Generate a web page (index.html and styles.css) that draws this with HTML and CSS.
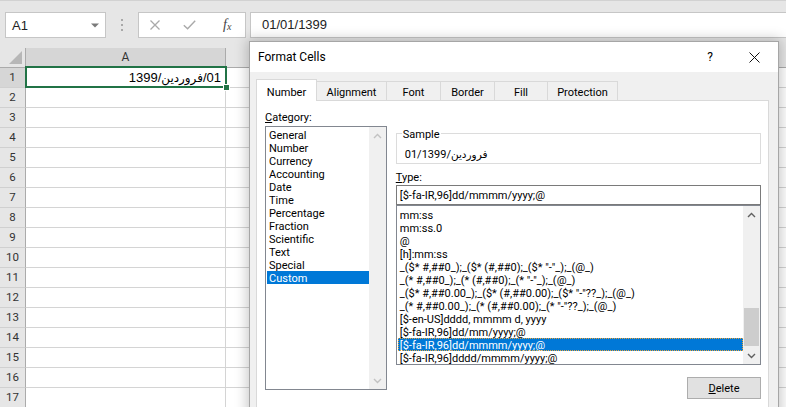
FILE: index.html
```html
<!DOCTYPE html>
<html lang="en">
<head>
<meta charset="utf-8">
<title>Format Cells</title>
<link rel="stylesheet" href="styles.css">
</head>
<body>
<div class="app">
  <div class="ribbon-edge"></div>
  <div class="fbar">
    <div class="namebox"><span>A1</span><svg class="nb-arrow" width="8" height="5" viewBox="0 0 8 5"><path d="M0 0.5h8L4 4.5z" fill="#7a7a7a"/></svg></div>
    <div class="grip"><i></i><i></i><i></i></div>
    <div class="fbtns">
      <svg class="ic-cancel" width="10" height="10" viewBox="0 0 10 10"><path d="M0.5 0.5L9.5 9.5M9.5 0.5L0.5 9.5" stroke="#a9a9a9" stroke-width="1.3" fill="none"/></svg>
      <svg class="ic-ok" width="13" height="10" viewBox="0 0 13 10"><path d="M0.8 5.2L4.6 8.8L12.2 0.8" stroke="#a9a9a9" stroke-width="1.4" fill="none"/></svg>
      <span class="fx">f<sub>x</sub></span>
    </div>
    <div class="finput">01/01/1399</div>
  </div>

  <div class="sheet">
    <div class="row head">
      <div class="rh corner"><svg width="13" height="13" viewBox="0 0 13 13"><path d="M13 0V13H0z" fill="#b7b7b7"/></svg></div>
      <div class="ca hdr-sel">A</div>
      <div class="rest hdr"></div>
    </div>
    <div class="row"><div class="rh rh-sel">1</div><div class="ca a1"><span class="cv"><span>1399/</span><span class="ar">فروردین</span><span>/01</span></span></div><div class="rest"></div></div>
    <div class="row"><div class="rh">2</div><div class="ca"></div><div class="rest"></div></div>
    <div class="row"><div class="rh">3</div><div class="ca"></div><div class="rest"></div></div>
    <div class="row"><div class="rh">4</div><div class="ca"></div><div class="rest"></div></div>
    <div class="row"><div class="rh">5</div><div class="ca"></div><div class="rest"></div></div>
    <div class="row"><div class="rh">6</div><div class="ca"></div><div class="rest"></div></div>
    <div class="row"><div class="rh">7</div><div class="ca"></div><div class="rest"></div></div>
    <div class="row"><div class="rh">8</div><div class="ca"></div><div class="rest"></div></div>
    <div class="row"><div class="rh">9</div><div class="ca"></div><div class="rest"></div></div>
    <div class="row"><div class="rh">10</div><div class="ca"></div><div class="rest"></div></div>
    <div class="row"><div class="rh">11</div><div class="ca"></div><div class="rest"></div></div>
    <div class="row"><div class="rh">12</div><div class="ca"></div><div class="rest"></div></div>
    <div class="row"><div class="rh">13</div><div class="ca"></div><div class="rest"></div></div>
    <div class="row"><div class="rh">14</div><div class="ca"></div><div class="rest"></div></div>
    <div class="row"><div class="rh">15</div><div class="ca"></div><div class="rest"></div></div>
    <div class="row"><div class="rh">16</div><div class="ca"></div><div class="rest"></div></div>
    <div class="row"><div class="rh">17</div><div class="ca"></div><div class="rest"></div></div>
  </div>

  <div class="selbox"></div>
  <div class="selhandle"></div>

  <div class="dialog">
    <div class="titlebar">
      <span class="title">Format Cells</span>
      <span class="help">?</span>
      <svg class="close" width="11" height="11" viewBox="0 0 11 11"><path d="M0.5 0.5L10.5 10.5M10.5 0.5L0.5 10.5" stroke="#111" stroke-width="1" fill="none"/></svg>
    </div>
    <div class="dbody">
      <div class="tabs">
        <div class="tab active t-number">Number</div>
        <div class="tab t-align">Alignment</div>
        <div class="tab t-font">Font</div>
        <div class="tab t-border">Border</div>
        <div class="tab t-fill">Fill</div>
        <div class="tab t-prot">Protection</div>
      </div>
      <div class="panel">
        <div class="catcol">
          <div class="lbl"><u>C</u>ategory:</div>
          <div class="listbox cat">
            <div class="items">
              <div class="it">General</div>
              <div class="it">Number</div>
              <div class="it">Currency</div>
              <div class="it">Accounting</div>
              <div class="it">Date</div>
              <div class="it">Time</div>
              <div class="it">Percentage</div>
              <div class="it">Fraction</div>
              <div class="it">Scientific</div>
              <div class="it">Text</div>
              <div class="it">Special</div>
              <div class="it sel">Custom</div>
            </div>
            <div class="vscroll off">
              <div class="arr"><svg width="9" height="6" viewBox="0 0 9 6"><path d="M1 5L4.5 1.5L8 5" stroke="#c2c2c2" stroke-width="1.4" fill="none"/></svg></div>
              <div class="track"></div>
              <div class="arr"><svg width="9" height="6" viewBox="0 0 9 6"><path d="M1 1L4.5 4.5L8 1" stroke="#c2c2c2" stroke-width="1.4" fill="none"/></svg></div>
            </div>
          </div>
        </div>
        <div class="maincol">
          <div class="group">
            <span class="glabel">Sample</span>
            <div class="sample"><span>01/1399/</span><span class="ar">فروردین</span></div>
          </div>
          <div class="lbl type-lbl"><u>T</u>ype:</div>
          <div class="tinput">[$-fa-IR,96]dd/mmmm/yyyy;@</div>
          <div class="listbox types">
            <div class="items">
              <div class="it">mm:ss</div>
              <div class="it">mm:ss.0</div>
              <div class="it">@</div>
              <div class="it">[h]:mm:ss</div>
              <div class="it">_($* #,##0_);_($* (#,##0);_($* "-"_);_(@_)</div>
              <div class="it">_(* #,##0_);_(* (#,##0);_(* "-"_);_(@_)</div>
              <div class="it">_($* #,##0.00_);_($* (#,##0.00);_($* "-"??_);_(@_)</div>
              <div class="it">_(* #,##0.00_);_(* (#,##0.00);_(* "-"??_);_(@_)</div>
              <div class="it">[$-en-US]dddd, mmmm d, yyyy</div>
              <div class="it">[$-fa-IR,96]dd/mm/yyyy;@</div>
              <div class="it sel focus">[$-fa-IR,96]dd/mmmm/yyyy;@</div>
              <div class="it">[$-fa-IR,96]dddd/mmmm/yyyy;@</div>
            </div>
            <div class="vscroll">
              <div class="arr"><svg width="9" height="6" viewBox="0 0 9 6"><path d="M1 5L4.5 1.5L8 5" stroke="#606060" stroke-width="1.4" fill="none"/></svg></div>
              <div class="track"></div>
              <div class="thumb"></div>
              <div class="gap1"></div>
              <div class="arr"><svg width="9" height="6" viewBox="0 0 9 6"><path d="M1 1L4.5 4.5L8 1" stroke="#606060" stroke-width="1.4" fill="none"/></svg></div>
            </div>
          </div>
          <div class="btnrow"><button class="btn"><u>D</u>elete</button></div>
        </div>
      </div>
    </div>
  </div>
</div>
</body>
</html>
```

FILE: styles.css
```css
* { box-sizing: border-box; }

body {
  margin: 0;
  background: #e6e6e6;
  font-family: Roboto, "Noto Sans", "DejaVu Sans", sans-serif;
  color: #000;
}

.app {
  position: relative;
  width: 786px;
  height: 407px;
  overflow: hidden;
  background: #e6e6e6;
}

.ribbon-edge {
  height: 12px;
  border-top: 1px solid #d2d2d2;
}

/* formula bar */
.fbar {
  display: flex;
  height: 26px;
  padding-left: 5px;
}

.namebox {
  width: 101px;
  border: 1px solid #c6c6c6;
  background: #fff;
  display: flex;
  align-items: center;
  justify-content: space-between;
  padding: 0 6px 0 6px;
  font: 13px "Liberation Sans", sans-serif;
  color: #222;
}

.grip {
  width: 32px;
  display: flex;
  flex-direction: column;
  align-items: center;
  justify-content: center;
  gap: 3px;
}
.grip i {
  display: block;
  width: 2px;
  height: 2px;
  background: #a8a8a8;
}

.fbtns {
  width: 108px;
  border: 1px solid #c6c6c6;
  background: #fff;
  display: flex;
  align-items: center;
}
.ic-cancel { margin-left: 11px; }
.ic-ok { margin-left: 23px; }
.fx {
  margin-left: 27px;
  font: italic 14px "Liberation Serif", serif;
  color: #444;
  line-height: 1;
}
.fx sub {
  font-size: 10px;
  vertical-align: -1px;
}

.finput {
  flex: 1;
  margin-left: 4px;
  border: 1px solid #c6c6c6;
  border-right: none;
  background: #fff;
  padding-left: 11px;
  font: 13px "Liberation Sans", sans-serif;
  line-height: 24px;
  color: #222;
}

/* sheet */
.sheet {
  margin-top: 10px;
}
.row {
  display: flex;
  height: 20px;
}
.rh {
  width: 26px;
  border-right: 1px solid #ababab;
  border-bottom: 1px solid #d0d0d0;
  background: #e6e6e6;
  text-align: center;
  font-size: 11.5px;
  line-height: 19px;
  color: #333;
}
.rh-sel { background: #d6d6d6; }
.corner {
  display: flex;
  align-items: flex-end;
  justify-content: flex-end;
  padding: 0 3px 3px 0;
  border-bottom-color: #ababab;
}
.ca {
  width: 200px;
  border-right: 1px solid #d4d4d4;
  border-bottom: 1px solid #d4d4d4;
  background: #fff;
}
.rest {
  flex: 1;
  border-bottom: 1px solid #d4d4d4;
  background: #fff;
}
.hdr-sel {
  background: #d6d6d6;
  border-bottom-color: #ababab;
  border-right-color: #ababab;
  text-align: center;
  font-size: 12px;
  line-height: 19px;
  color: #333;
}
.rest.hdr {
  background: #e6e6e6;
  border-bottom-color: #ababab;
}
.a1 {
  display: flex;
  justify-content: flex-end;
  align-items: center;
  padding-right: 4px;
  font: 13px "Liberation Sans", "DejaVu Sans", sans-serif;
  color: #000;
}
.cv { display: inline-flex; align-items: baseline; }
.ar {
  font-family: "DejaVu Sans", "Noto Sans", sans-serif;
  font-size: 0.92em;
}

.selbox {
  position: absolute;
  left: 25px;
  top: 66px;
  width: 202px;
  height: 22px;
  border: 2px solid #217346;
}
.selhandle {
  position: absolute;
  left: 223px;
  top: 84px;
  width: 7px;
  height: 7px;
  background: #217346;
  border: 1px solid #fff;
}

/* dialog */
.dialog {
  position: absolute;
  left: 249px;
  top: 41px;
  width: 530px;
  height: 380px;
  border: 1px solid #a6a6a6;
  background: #f0f0f0;
  box-shadow: 0 0 12px 2px rgba(0, 0, 0, 0.22);
  font-size: 11px;
  display: flex;
  flex-direction: column;
}
.titlebar {
  height: 30px;
  background: #fff;
  display: flex;
  align-items: center;
  padding: 0 18px 0 8px;
}
.title {
  font-size: 12px;
  flex: 1;
}
.help {
  font-size: 12px;
  margin-right: 36px;
}

.dbody {
  flex: 1;
  display: flex;
  flex-direction: column;
  padding: 0 9px 0 6px;
}
.tabs {
  height: 28px;
  display: flex;
  align-items: flex-end;
}
.tab {
  height: 19px;
  border: 1px solid #d9d9d9;
  border-bottom: none;
  margin-left: -1px;
  background: #f0f0f0;
  text-align: center;
  line-height: 21px;
}
.tab.active {
  position: relative;
  z-index: 1;
  height: 22px;
  margin-left: 0;
  margin-bottom: -1px;
  background: #fff;
  line-height: 25px;
}
.t-number { width: 61px; }
.t-align { width: 71px; }
.t-font { width: 55px; }
.t-border { width: 55px; }
.t-fill { width: 54px; }
.t-prot { width: 71px; }

.panel {
  flex: 1;
  background: #fff;
  border: 1px solid #d9d9d9;
  display: flex;
  gap: 9px;
  padding: 9px 7px 0 8px;
}

.lbl {
  line-height: 13px;
  height: 13px;
  padding-top: 1px;
}
.catcol {
  width: 122px;
  display: flex;
  flex-direction: column;
}
.catcol .lbl { margin-bottom: 3px; }

.listbox {
  border: 1px solid #828790;
  background: #fff;
  display: flex;
  overflow: hidden;
}
.listbox.cat { height: 264px; }
.items {
  flex: 1;
  padding: 1px 0 0 1px;
  overflow: hidden;
}
.it {
  height: 13px;
  line-height: 13px;
  padding: 1px 0 0 2px;
  white-space: nowrap;
}
.it.sel {
  background: #0078d7;
  color: #fff;
}
.it.focus {
  outline: 1px dotted #e8a33a;
  outline-offset: -1px;
}
.vscroll {
  width: 17px;
  background: #f0f0f0;
  display: flex;
  flex-direction: column;
}
.arr {
  height: 17px;
  display: flex;
  align-items: center;
  justify-content: center;
}
.track { flex: 1; }
.thumb {
  height: 38px;
  margin: 0 1px;
  background: #cdcdcd;
}
.gap1 { height: 1px; }

.maincol {
  width: 366px;
  display: flex;
  flex-direction: column;
}
.group {
  position: relative;
  margin-top: 23px;
  height: 31px;
  border: 1px solid #dcdcdc;
}
.glabel {
  position: absolute;
  left: 5px;
  top: -7px;
  padding: 1px 1px 0;
  background: #fff;
  line-height: 13px;
}
.sample {
  display: flex;
  align-items: baseline;
  padding: 14px 0 0 8px;
  line-height: 13px;
}
.sample .ar { font-size: 10.5px; }

.type-lbl { margin-top: 6px; }
.tinput {
  margin-top: 2px;
  height: 20px;
  border: 1px solid #7a7a7a;
  padding-left: 3px;
  line-height: 19px;
  white-space: nowrap;
}
.listbox.types {
  height: 160px;
}
.types .items { padding-top: 2px; }

.btnrow {
  display: flex;
  justify-content: flex-end;
  margin-top: 12px;
}
.btn {
  width: 74px;
  height: 22px;
  background: #e1e1e1;
  border: 1px solid #adadad;
  font: 11px Roboto, "Noto Sans", sans-serif;
  color: #000;
  padding: 0;
}
```
